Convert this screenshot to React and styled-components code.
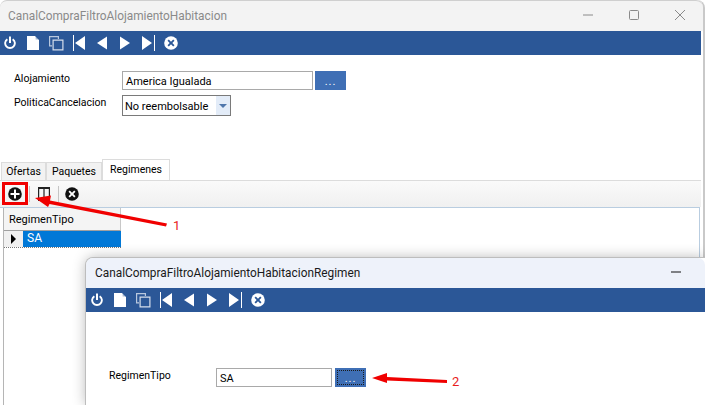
import React from 'react';
import styled, { createGlobalStyle } from 'styled-components';

const Global = createGlobalStyle`
    html, body {
        margin: 0;
        width: 705px;
        height: 405px;
        overflow: hidden;
        background: #fff;
    }
    body {
        font-family: Roboto, "Noto Sans", sans-serif;
        color: #000;
    }
`

const Screen = styled.div`
    position: relative;
    width: 705px;
    height: 405px;
    overflow: hidden;
    background: #fff;
`

const Window = styled.div`
    display: flex;
    flex-direction: column;
    width: 703px;
    height: 405px;
    border-right: 2px solid #c9c9c9;
    border-top-right-radius: 8px;
`

const FloatingWindow = styled.div`
    position: absolute;
    left: 86px;
    top: 258px;
    width: 619px;
    height: 147px;
    display: flex;
    flex-direction: column;
    background: #fff;
    border-top-left-radius: 7px;
    box-shadow: 0 0 0 1px #bdbdbd, 0 0 14px rgba(0, 0, 0, 0.3);
`

const TitleBar = styled.div`
    display: flex;
    align-items: center;
    height: ${p => p.$height}px;
    padding-left: ${p => p.$left}px;
    padding-bottom: 2px;
    background: ${p => p.$active ? '#eef2fa' : '#f3f3f3'};
    border-top: ${p => p.$active ? '0' : '1px solid #cfcfcf'};
    border-top-left-radius: 7px;
    border-top-right-radius: 7px;
    box-sizing: border-box;
    flex-shrink: 0;
`

const Title = styled.span`
    flex: 1;
    margin-top: 2px;
    font-size: 11.85px;
    white-space: nowrap;
    color: ${p => p.$active ? '#1a1a1a' : '#8a8a8a'};
`

const Caption = styled.div`
    display: flex;
    align-items: center;
    padding-right: ${p => p.$right || 0}px;
`

const CaptionButton = styled.div`
    display: flex;
    align-items: center;
    justify-content: center;
    width: 46px;
    height: 24px;
`

const BlueBar = styled.div`
    display: flex;
    align-items: center;
    height: 24px;
    margin-right: ${p => p.$right || 0}px;
    padding-left: ${p => p.$left}px;
    background: #2b5797;
    flex-shrink: 0;
`

const ToolIcon = styled.svg`
    display: block;
    width: ${p => p.$w || 14}px;
    height: 16px;
    margin-right: ${p => p.$mr || 0}px;
    fill: ${p => p.$color || '#fff'};
    flex-shrink: 0;
`

const Form = styled.div`
    display: flex;
    flex-direction: column;
    gap: 5px;
    height: 104px;
    padding: 16px 0 0 14px;
    box-sizing: border-box;
    flex-shrink: 0;
`

const Row = styled.div`
    display: flex;
    align-items: center;
`

const Label = styled.span`
    width: ${p => p.$width}px;
    font-size: 10.5px;
    white-space: nowrap;
    position: relative;
    top: -${p => p.$up}px;
`

const Input = styled.div`
    display: flex;
    align-items: center;
    width: ${p => p.$width}px;
    height: 19px;
    padding: 1px 0 0 3px;
    border: 1px solid #a9a9a9;
    box-sizing: border-box;
    font-size: 11px;
    background: #fff;
`

const Browse = styled.div`
    display: flex;
    align-items: flex-end;
    justify-content: center;
    width: 31px;
    height: 19px;
    margin-left: ${p => p.$gap}px;
    padding-bottom: 4px;
    box-sizing: border-box;
    background: #3f6fb5;
    color: #fff;
    font-size: 11px;
    line-height: 8px;
    letter-spacing: 1px;
    outline: ${p => p.$focus ? '1px dotted #1a1a1a' : 'none'};
    outline-offset: -3px;
`

const Select = styled.div`
    display: flex;
    align-items: center;
    justify-content: space-between;
    width: 109px;
    height: 21px;
    padding-left: 2px;
    border: 1px solid #7a7a7a;
    box-sizing: border-box;
    font-size: 11px;
`

const SelectValue = styled.span`
    padding-top: 1px;
`

const SelectArrow = styled.div`
    display: flex;
    align-items: center;
    justify-content: center;
    width: 14px;
    height: 100%;
    background: #e3ecf8;
    &::after {
        content: '';
        border-left: 4px solid transparent;
        border-right: 4px solid transparent;
        border-top: 4px solid #4f76ab;
    }
`

const Tabs = styled.div`
    display: flex;
    align-items: flex-end;
    height: 21px;
    padding-left: 1px;
    flex-shrink: 0;
`

const Tab = styled.div`
    display: flex;
    align-items: center;
    justify-content: center;
    width: ${p => p.$width}px;
    height: ${p => p.$active ? 21 : 18}px;
    padding-bottom: ${p => p.$active ? 2 : 0}px;
    font-size: 10.5px;
    background: ${p => p.$active ? '#fff' : '#f2f2f2'};
    border: 1px solid #dcdcdc;
    border-bottom: 0;
    box-sizing: border-box;
`

const TabPage = styled.div`
    display: flex;
    flex-direction: column;
    flex: 1;
    margin-right: 2px;
    border-top: 1px solid #dcdcdc;
`

const GridBar = styled.div`
    display: flex;
    align-items: center;
    height: 26px;
    padding: 0 0 1px 8px;
    background: linear-gradient(#fafafa, #f0f0f0);
    box-sizing: border-box;
    flex-shrink: 0;
`

const Divider = styled.div`
    width: 1px;
    height: 16px;
    background: #c4c4c4;
    margin: 0 6px;
`

const GridArea = styled.div`
    flex: 1;
    margin-right: 1px;
    border-top: 1px solid #b9cde0;
    border-right: 1px solid #b9cde0;
`

const Grid = styled.div`
    width: 117px;
    margin-left: 3px;
    border-left: 1px solid #b5b5b5;
    height: 200px;
`

const GridHead = styled.div`
    display: flex;
    align-items: center;
    height: 23px;
    padding-left: 5px;
    font-size: 11px;
    background: #f4f4f4;
    border-bottom: 1px solid #a0a0a0;
    border-right: 1px solid #c8c8c8;
    box-sizing: border-box;
`

const GridRow = styled.div`
    display: flex;
    height: 17px;
    border-bottom: 1px dotted #777;
    box-sizing: border-box;
`

const RowHeader = styled.div`
    display: flex;
    align-items: center;
    justify-content: center;
    width: 19px;
    background: #f0f0f0;
    &::after {
        content: '';
        border-top: 5px solid transparent;
        border-bottom: 5px solid transparent;
        border-left: 5px solid #000;
    }
`

const RowCell = styled.div`
    flex: 1;
    padding-left: 4px;
    font-size: 12px;
    line-height: 15px;
    color: #fff;
    background: #0078d7;
`

const ChildBody = styled.div`
    flex: 1;
    padding: 56px 0 0 23px;
`

const Overlay = styled.svg`
    position: absolute;
    left: 0;
    top: 0;
    width: 705px;
    height: 405px;
    pointer-events: none;
`

const Marker = styled.span`
    position: absolute;
    left: ${p => p.$left}px;
    top: ${p => p.$top}px;
    font-size: 13px;
    line-height: 16px;
    color: #e81c1c;
`

const Highlight = styled.div`
    position: absolute;
    left: 2px;
    top: 182px;
    width: 26px;
    height: 23px;
    border: 3px solid #f00000;
    box-sizing: border-box;
`

const Power = () => (
    <ToolIcon viewBox="0 0 14 16" $mr={9}>
        <path d="M6 1.500h2V8H6z" />
        <path d="M3.800 3.400l1.100 1.500a3.900 3.900 0 1 0 4.200 0l1.100-1.500a5.800 5.800 0 1 1-6.400 0z" />
    </ToolIcon>
)

const NewDoc = () => (
    <ToolIcon viewBox="0 0 14 16" $mr={8}>
        <path d="M1 1h8l4 4v10H1z" />
        <path d="M9.600 1L13 4.400H9.600z" fill="#2b5797" opacity="0.4" />
    </ToolIcon>
)

const Copy = () => (
    <ToolIcon viewBox="0 0 16 16" $w={16} $mr={9}>
        <path d="M1 1h10v3H9.800V2.200H2.200v8H4v1.200H1z" fill="#b9c8de" />
        <path fillRule="evenodd" d="M4.500 4.500h11v11h-11zM5.700 5.700v8.600h8.600V5.700z" fill="#d5deeb" />
    </ToolIcon>
)

const First = () => (
    <ToolIcon viewBox="0 0 13 16" $w={13} $mr={11}>
        <path d="M0 0h1v16H0zM12 1v14L2 8z" />
    </ToolIcon>
)

const Prev = () => (
    <ToolIcon viewBox="0 0 10 16" $w={10} $mr={13}>
        <path d="M10 1.500v13L0 8z" />
    </ToolIcon>
)

const Next = () => (
    <ToolIcon viewBox="0 0 10 16" $w={10} $mr={12}>
        <path d="M0 1.500v13L10 8z" />
    </ToolIcon>
)

const Last = () => (
    <ToolIcon viewBox="0 0 13 16" $w={13} $mr={9}>
        <path d="M12 0h1v16h-1zM0 1v14l10-7z" />
    </ToolIcon>
)

const Cancel = ({ color = '#fff', cut = '#2b5797' }) => (
    <ToolIcon viewBox="0 0 14 16" $color={color}>
        <circle cx="7" cy="8" r="6.800" />
        <path d="M4.800 4.500L7 6.700l2.200-2.200 1.300 1.300L8.300 8l2.200 2.200-1.300 1.300L7 9.300l-2.200 2.200-1.300-1.300L5.700 8 3.500 5.800z" fill={cut} />
    </ToolIcon>
)

const Add = () => (
    <ToolIcon viewBox="0 0 14 16" $color="#111" $mr={1}>
        <circle cx="7" cy="8" r="6.800" />
        <path d="M6 3.500h2V7h3.500v2H8v3.500H6V9H2.500V7H6z" fill="#fff" />
    </ToolIcon>
)

const Columns = () => (
    <ToolIcon viewBox="0 0 16 16" $w={16} $color="#222">
        <path fillRule="evenodd" d="M2 1h12v14H2zM3.200 3v10.800h4.200V3zM8.600 3v10.800h4.200V3z" />
    </ToolIcon>
)

const MainToolbar = () => (
    <>
        <Power />
        <NewDoc />
        <Copy />
        <First />
        <Prev />
        <Next />
        <Last />
        <Cancel />
    </>
)

const App = () => {
    return (
        <Screen>
            <Global />
            <Window>
                <TitleBar $height={31} $left={8}>
                    <Title>CanalCompraFiltroAlojamientoHabitacion</Title>
                    <Caption>
                        <CaptionButton>
                            <svg width="10" height="10" viewBox="0 0 10 10"><path d="M0 5h10" stroke="#8a8a8a" /></svg>
                        </CaptionButton>
                        <CaptionButton>
                            <svg width="10" height="10" viewBox="0 0 10 10"><rect x="0.500" y="0.500" width="9" height="9" rx="1" fill="none" stroke="#8a8a8a" /></svg>
                        </CaptionButton>
                        <CaptionButton>
                            <svg width="10" height="10" viewBox="0 0 10 10"><path d="M0 0l10 10M10 0L0 10" stroke="#8a8a8a" /></svg>
                        </CaptionButton>
                    </Caption>
                </TitleBar>
                <BlueBar $left={3} $right={2}>
                    <MainToolbar />
                </BlueBar>
                <Form>
                    <Row>
                        <Label $width={108} $up={2}>Alojamiento</Label>
                        <Input $width={191}>America Igualada</Input>
                        <Browse $gap={2}>...</Browse>
                    </Row>
                    <Row>
                        <Label $width={108} $up={3}>PoliticaCancelacion</Label>
                        <Select>
                            <SelectValue>No reembolsable</SelectValue>
                            <SelectArrow />
                        </Select>
                    </Row>
                </Form>
                <Tabs>
                    <Tab $width={45}>Ofertas</Tab>
                    <Tab $width={56}>Paquetes</Tab>
                    <Tab $width={68} $active>Regimenes</Tab>
                </Tabs>
                <TabPage>
                    <GridBar>
                        <Add />
                        <Divider />
                        <Columns />
                        <Divider />
                        <Cancel color="#111" cut="#fff" />
                    </GridBar>
                    <GridArea>
                        <Grid>
                            <GridHead>RegimenTipo</GridHead>
                            <GridRow>
                                <RowHeader />
                                <RowCell>SA</RowCell>
                            </GridRow>
                        </Grid>
                    </GridArea>
                </TabPage>
            </Window>
            <FloatingWindow>
                <TitleBar $height={30} $left={9} $active>
                    <Title $active>CanalCompraFiltroAlojamientoHabitacionRegimen</Title>
                    <Caption $right={6}>
                        <CaptionButton>
                            <svg width="10" height="10" viewBox="0 0 10 10"><path d="M0 5h10" stroke="#111" /></svg>
                        </CaptionButton>
                    </Caption>
                </TitleBar>
                <BlueBar $left={4}>
                    <MainToolbar />
                </BlueBar>
                <ChildBody>
                    <Row>
                        <Label $width={107} $up={2}>RegimenTipo</Label>
                        <Input $width={116}>SA</Input>
                        <Browse $gap={3} $focus>...</Browse>
                    </Row>
                </ChildBody>
            </FloatingWindow>
            <Highlight />
            <Overlay viewBox="0 0 705 405">
                <path d="M35 198L51 195.500L50 200.500L167 223.500L166 226.500L49.500 204L48 207z" fill="#f00000" />
                <path d="M372 378L387 373V377L447 380V383L387 380.500V383z" fill="#f00000" />
            </Overlay>
            <Marker $left={173} $top={218}>1</Marker>
            <Marker $left={452} $top={374}>2</Marker>
        </Screen>
    )
}

export default App
